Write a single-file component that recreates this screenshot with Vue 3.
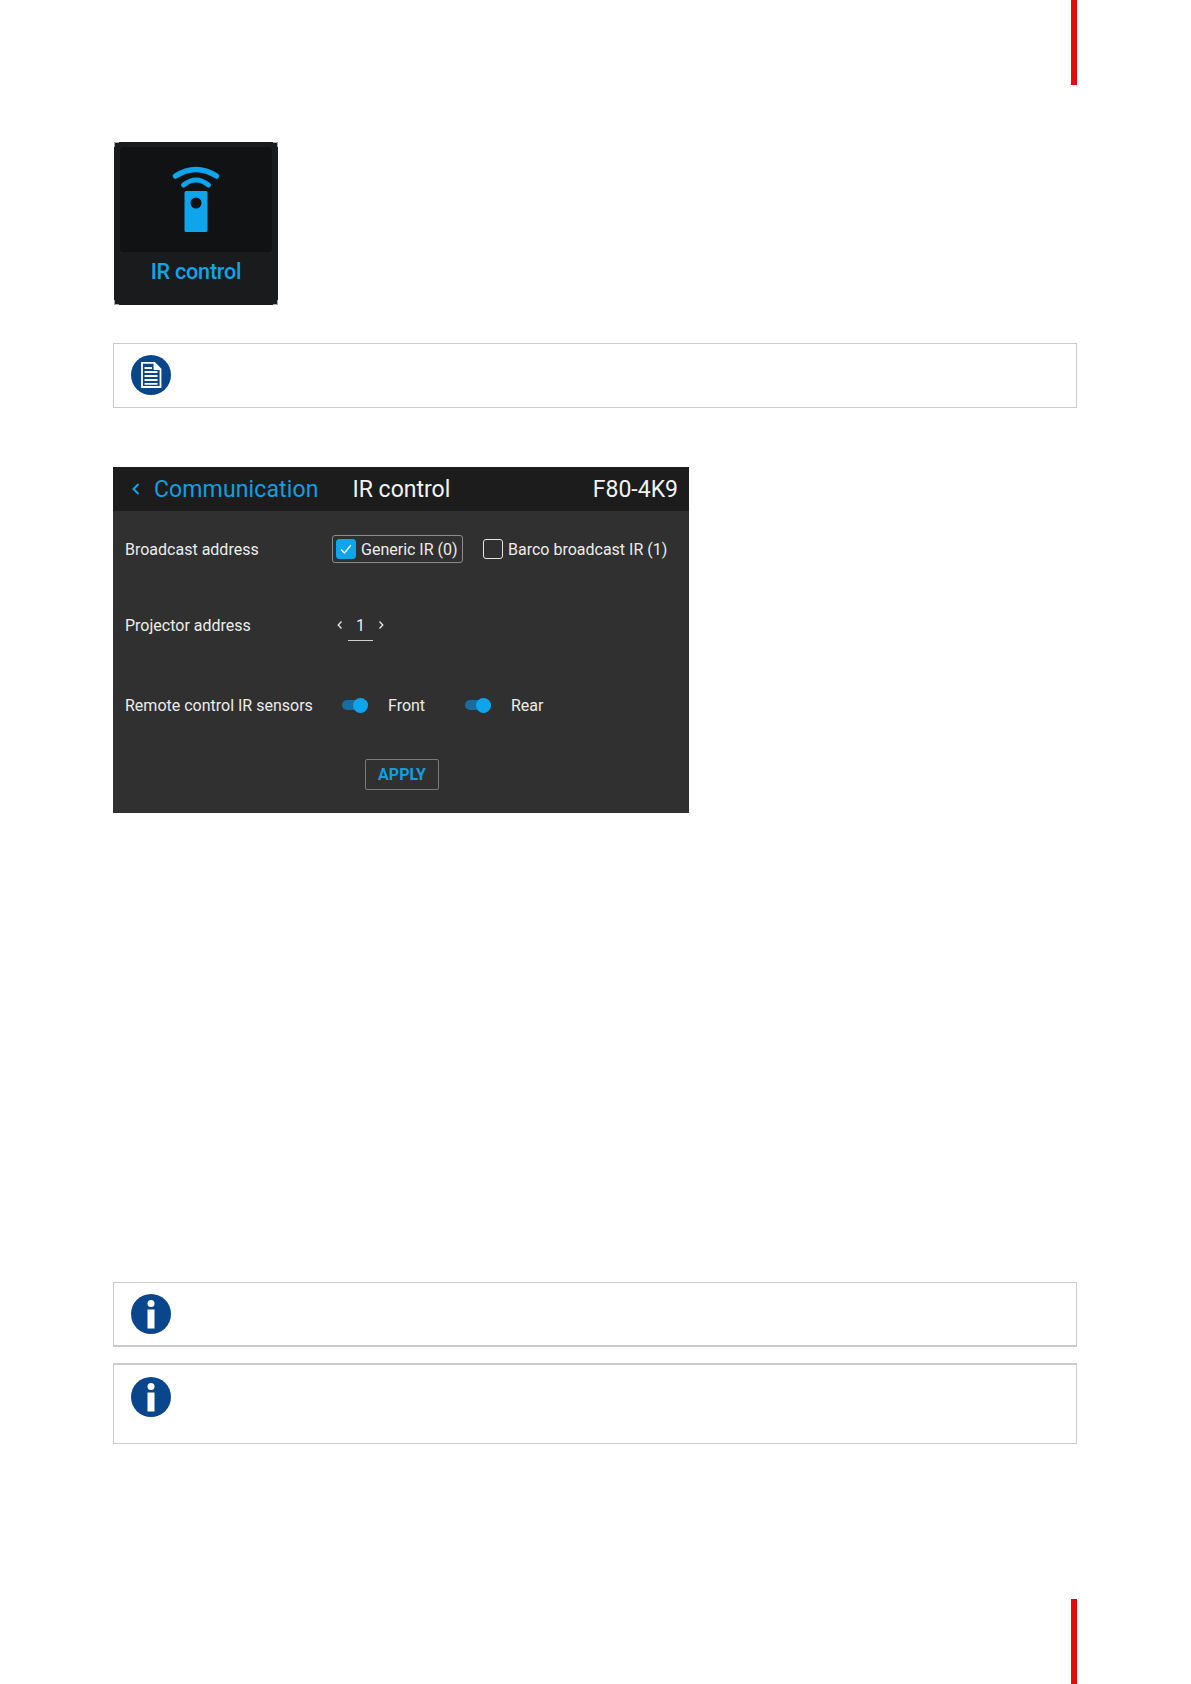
<script setup>
</script>

<template>
  <div class="page">
    <div class="edge-bar"></div>

    <div class="tile">
      <i class="corner tl"></i><i class="corner tr"></i><i class="corner bl"></i><i class="corner br"></i>
      <div class="tile-art">
        <svg width="56" height="72" viewBox="0 0 56 72">
          <path d="M7.500 15 Q28 2 48.500 15" fill="none" stroke="#0ea5ec" stroke-width="5.500" stroke-linecap="round"/>
          <path d="M15.500 24 Q28 14 40.500 24" fill="none" stroke="#0ea5ec" stroke-width="5" stroke-linecap="round"/>
          <path fill-rule="evenodd" fill="#0ea5ec" d="M18 30h20a1.500 1.500 0 0 1 1.500 1.500v38a1.500 1.500 0 0 1-1.500 1.500h-20a1.500 1.500 0 0 1-1.500-1.500v-38a1.500 1.500 0 0 1 1.500-1.500zM28 36.500a5.500 5.500 0 1 0 0 11 5.500 5.500 0 0 0 0-11z"/>
        </svg>
      </div>
      <div class="tile-label">IR control</div>
    </div>

    <div class="note note-one">
      <svg class="note-icon" width="40" height="40" viewBox="0 0 40 40">
        <circle cx="20" cy="20" r="20" fill="#0a468c"/>
        <path d="M11 7.800h12.500l6 6.200v18h-18.500z" fill="none" stroke="#fff" stroke-width="1.800"/>
        <path d="M23 8v6.500h6.500z" fill="#fff" stroke="#fff" stroke-width="1"/>
        <path d="M13.500 13h7.500M13.500 17h13M13.500 21h13M13.500 25h13M13.500 28.800h13" stroke="#fff" stroke-width="1.800"/>
      </svg>
    </div>

    <div class="panel">
      <div class="panel-head">
        <svg class="back" width="10" height="14" viewBox="0 0 10 14"><path d="M7.500 2 2.500 7l5 5" fill="none" stroke="#0ea5ec" stroke-width="2"/></svg>
        <span class="crumb">Communication</span>
        <span class="title">IR control</span>
        <span class="model">F80-4K9</span>
      </div>
      <div class="panel-body">
        <div class="row row-broadcast">
          <span class="label">Broadcast address</span>
          <div class="controls">
            <div class="choice selected">
              <span class="check on">
                <svg width="14" height="12" viewBox="0 0 14 12"><path d="M2 6.500 5.500 10 12 2" fill="none" stroke="#fff" stroke-width="1.300"/></svg>
              </span>
              <span>Generic IR (0)</span>
            </div>
            <div class="choice plain">
              <span class="check"></span>
              <span>Barco broadcast IR (1)</span>
            </div>
          </div>
        </div>
        <div class="row row-projector">
          <span class="label">Projector address</span>
          <div class="controls stepper">
            <svg width="6" height="10" viewBox="0 0 6 10"><path d="M4.500 1.500 1.200 5l3.300 3.500" fill="none" stroke="#e8e8e8" stroke-width="1.300"/></svg>
            <span class="step-value">1</span>
            <svg width="6" height="10" viewBox="0 0 6 10"><path d="M1.500 1.500 4.800 5 1.500 8.500" fill="none" stroke="#e8e8e8" stroke-width="1.300"/></svg>
          </div>
        </div>
        <div class="row row-sensors">
          <span class="label">Remote control IR sensors</span>
          <div class="controls sensors">
            <span class="toggle"><i></i></span>
            <span class="sensor-name front">Front</span>
            <span class="toggle"><i></i></span>
            <span class="sensor-name">Rear</span>
          </div>
        </div>
        <div class="apply-wrap"><span class="apply">APPLY</span></div>
      </div>
    </div>

    <div class="note note-two">
      <svg class="note-icon" width="40" height="40" viewBox="0 0 40 40">
        <circle cx="20" cy="20" r="20" fill="#0a468c"/>
        <circle cx="20" cy="9.500" r="3.500" fill="#fff"/>
        <rect x="16.500" y="15.500" width="7" height="19" fill="#fff"/>
      </svg>
    </div>
    <div class="note note-three">
      <svg class="note-icon" width="40" height="40" viewBox="0 0 40 40">
        <circle cx="20" cy="20" r="20" fill="#0a468c"/>
        <circle cx="20" cy="9.500" r="3.500" fill="#fff"/>
        <rect x="16.500" y="15.500" width="7" height="19" fill="#fff"/>
      </svg>
    </div>

    <div class="edge-bar bottom"></div>
  </div>
</template>

<style>
html, body { margin: 0; background: #fff; }
</style>

<style scoped>
.page {
  box-sizing: border-box;
  width: 1191px;
  height: 1684px;
  padding-left: 113px;
  padding-right: 114px;
  display: flex;
  flex-direction: column;
  background: #fff;
  font-family: Roboto, "Liberation Sans", sans-serif;
}
.edge-bar {
  align-self: flex-end;
  flex: none;
  width: 6px;
  height: 85px;
  background: #e8070f;
}
.edge-bar.bottom { margin-top: auto; }

.tile {
  position: relative;
  flex: none;
  box-sizing: border-box;
  width: 164px;
  height: 163px;
  margin-top: 57px;
  margin-left: 1px;
  padding: 5px 6px 0;
  background: #1a1b1c;
  border-radius: 4px;
}
.corner { position: absolute; width: 4px; height: 4px; border: 0 solid #aaa; }
.tl { left: 0; top: 0; border-width: 1px 0 0 1px; }
.tr { right: 0; top: 0; border-width: 1px 1px 0 0; }
.bl { left: 0; bottom: 0; border-width: 0 0 1px 1px; }
.br { right: 0; bottom: 0; border-width: 0 1px 1px 0; }
.tile-art {
  height: 105px;
  background: #111213;
  border-radius: 4px;
  display: flex;
  justify-content: center;
  padding-top: 14px;
  box-sizing: border-box;
}
.tile-label {
  margin-top: 7px;
  text-align: center;
  color: #0ea5ec;
  font-size: 21.500px;
  font-weight: 500;
  line-height: 26px;
  letter-spacing: -0.2px;
}

.note {
  flex: none;
  box-sizing: border-box;
  border: 1px solid #cbcbcb;
  padding-left: 17px;
}
.note-icon { display: block; }
.note-one { height: 65px; margin-top: 38px; padding-top: 11px; }
.note-two { height: 65px; margin-top: 469px; padding-top: 11px; border-width: 1px 1px 2px; }
.note-three { height: 81px; margin-top: 16px; padding-top: 12px; border-width: 2px 1px 1px; }

.panel {
  flex: none;
  width: 576px;
  height: 346px;
  margin-top: 59px;
  background: #303030;
  color: #ececec;
  display: flex;
  flex-direction: column;
}
.panel-head {
  flex: none;
  height: 44px;
  background: #1c1c1c;
  display: flex;
  align-items: center;
  padding: 0 11px 0 18px;
  font-size: 23px;
}
.back { margin-right: 13px; }
.crumb { color: #0f9fe0; letter-spacing: 0.12px; }
.title { margin-left: 34px; color: #f2f2f2; }
.model { margin-left: auto; color: #f2f2f2; }
.panel-body {
  flex: 1;
  display: flex;
  flex-direction: column;
  padding-left: 12px;
  font-size: 16px;
}
.row {
  display: grid;
  grid-template-columns: 207px 1fr;
  align-items: center;
}
.row-broadcast { height: 28px; margin-top: 24px; }
.row-projector { height: 28px; margin-top: 48px; }
.row-sensors { height: 28px; margin-top: 52px; }
.label { white-space: nowrap; }
.controls { display: flex; align-items: center; }
.choice { display: flex; align-items: center; gap: 5px; box-sizing: border-box; height: 28px; white-space: nowrap; }
.choice.selected {
  width: 131px;
  padding-left: 3px;
  border: 1px solid #8c8c8c;
  border-radius: 3px;
}
.choice.plain { margin-left: 20px; }
.check {
  box-sizing: border-box;
  width: 20px;
  height: 20px;
  flex: none;
  border: 1.500px solid #e4e4e4;
  border-radius: 3px;
  display: flex;
  align-items: center;
  justify-content: center;
}
.check.on { background: #0ea5ec; border-color: #0ea5ec; }
.stepper { position: relative; padding-left: 5px; height: 28px; }
.step-value { width: 35px; text-align: center; position: relative; }
.step-value::after {
  content: "";
  position: absolute;
  left: 5px;
  right: 5px;
  top: 24px;
  height: 1px;
  background: #d0d0d0;
}
.sensors { padding-left: 10px; }
.toggle {
  position: relative;
  display: block;
  width: 26px;
  height: 10px;
  border-radius: 5px;
  background: #1a6c9e;
  flex: none;
}
.toggle i {
  position: absolute;
  right: 0;
  top: -2.500px;
  width: 15px;
  height: 15px;
  border-radius: 50%;
  background: #0ea5ec;
}
.sensor-name { margin-left: 20px; }
.sensor-name.front { width: 77px; }
.apply-wrap { display: flex; padding-left: 240px; margin-top: 40px; }
.apply {
  box-sizing: border-box;
  width: 74px;
  height: 31px;
  display: flex;
  align-items: center;
  justify-content: center;
  border: 1px solid #7a7a7a;
  border-radius: 2px;
  color: #0f9fe0;
  font-weight: 700;
  font-size: 16px;
}
</style>
